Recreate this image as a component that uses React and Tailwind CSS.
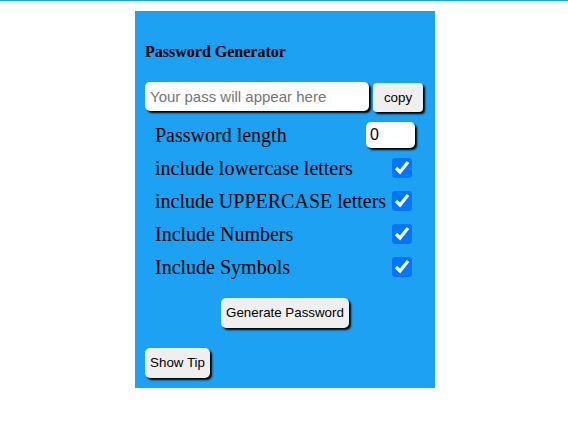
import React from 'react'

const shadow = 'shadow-[2px_2px_2px_#000]'

const Row = ({ label, children }) => (
  <div className="flex h-[33px] items-center justify-between px-[10px]">
    <span className="text-[20px] text-black">{label}</span>
    {children}
  </div>
)

const Check = () => (
  <input type="checkbox" defaultChecked className="m-0 mr-[3px] h-[20px] w-[20px] accent-[#0075ff]" />
)

export default function App() {
  return (
    <div className="min-h-screen bg-white pl-[2px] font-['Liberation_Serif',serif]">
      <div className="-ml-[2px] h-px bg-[#1da1f2]" />
      <div className="mx-auto mt-[10px] flex w-[300px] flex-col bg-[#1da1f2] px-[10px] pb-[10px] pt-[32px]">
        <h3 className="text-[16px] font-bold leading-[18px] text-black">Password Generator</h3>

        <div className="mt-[21px] flex items-start gap-[4px]">
          <input
            type="text"
            readOnly
            placeholder="Your pass will appear here"
            className={`h-[29px] w-[224px] rounded-[5px] bg-white px-[5px] font-['Liberation_Sans',sans-serif] text-[15px] outline-none placeholder:text-[#757575] ${shadow}`}
          />
          <button className={`mt-px h-[29px] w-[50px] rounded-[4px] bg-[#efefef] font-['Liberation_Sans',sans-serif] text-[13.33px] text-black ${shadow}`}>
            copy
          </button>
        </div>

        <div className="mt-[6px] flex flex-col">
          <Row label="Password length">
            <input
              type="number"
              defaultValue={0}
              className={`h-[26px] w-[49px] rounded-[5px] bg-white px-[4px] font-['Liberation_Sans',sans-serif] text-[16px] text-black outline-none [appearance:textfield] ${shadow}`}
            />
          </Row>
          <Row label="include lowercase letters"><Check /></Row>
          <Row label="include UPPERCASE letters"><Check /></Row>
          <Row label="Include Numbers"><Check /></Row>
          <Row label="Include Symbols"><Check /></Row>
        </div>

        <button className={`mx-auto mt-[15px] h-[30px] w-[128px] rounded-[5px] bg-[#efefef] font-['Liberation_Sans',sans-serif] text-[13.33px] text-black ${shadow}`}>
          Generate Password
        </button>

        <button className={`mt-[20px] h-[30px] w-[65px] rounded-[5px] bg-[#efefef] font-['Liberation_Sans',sans-serif] text-[13.33px] text-black ${shadow}`}>
          Show Tip
        </button>
      </div>
    </div>
  )
}
